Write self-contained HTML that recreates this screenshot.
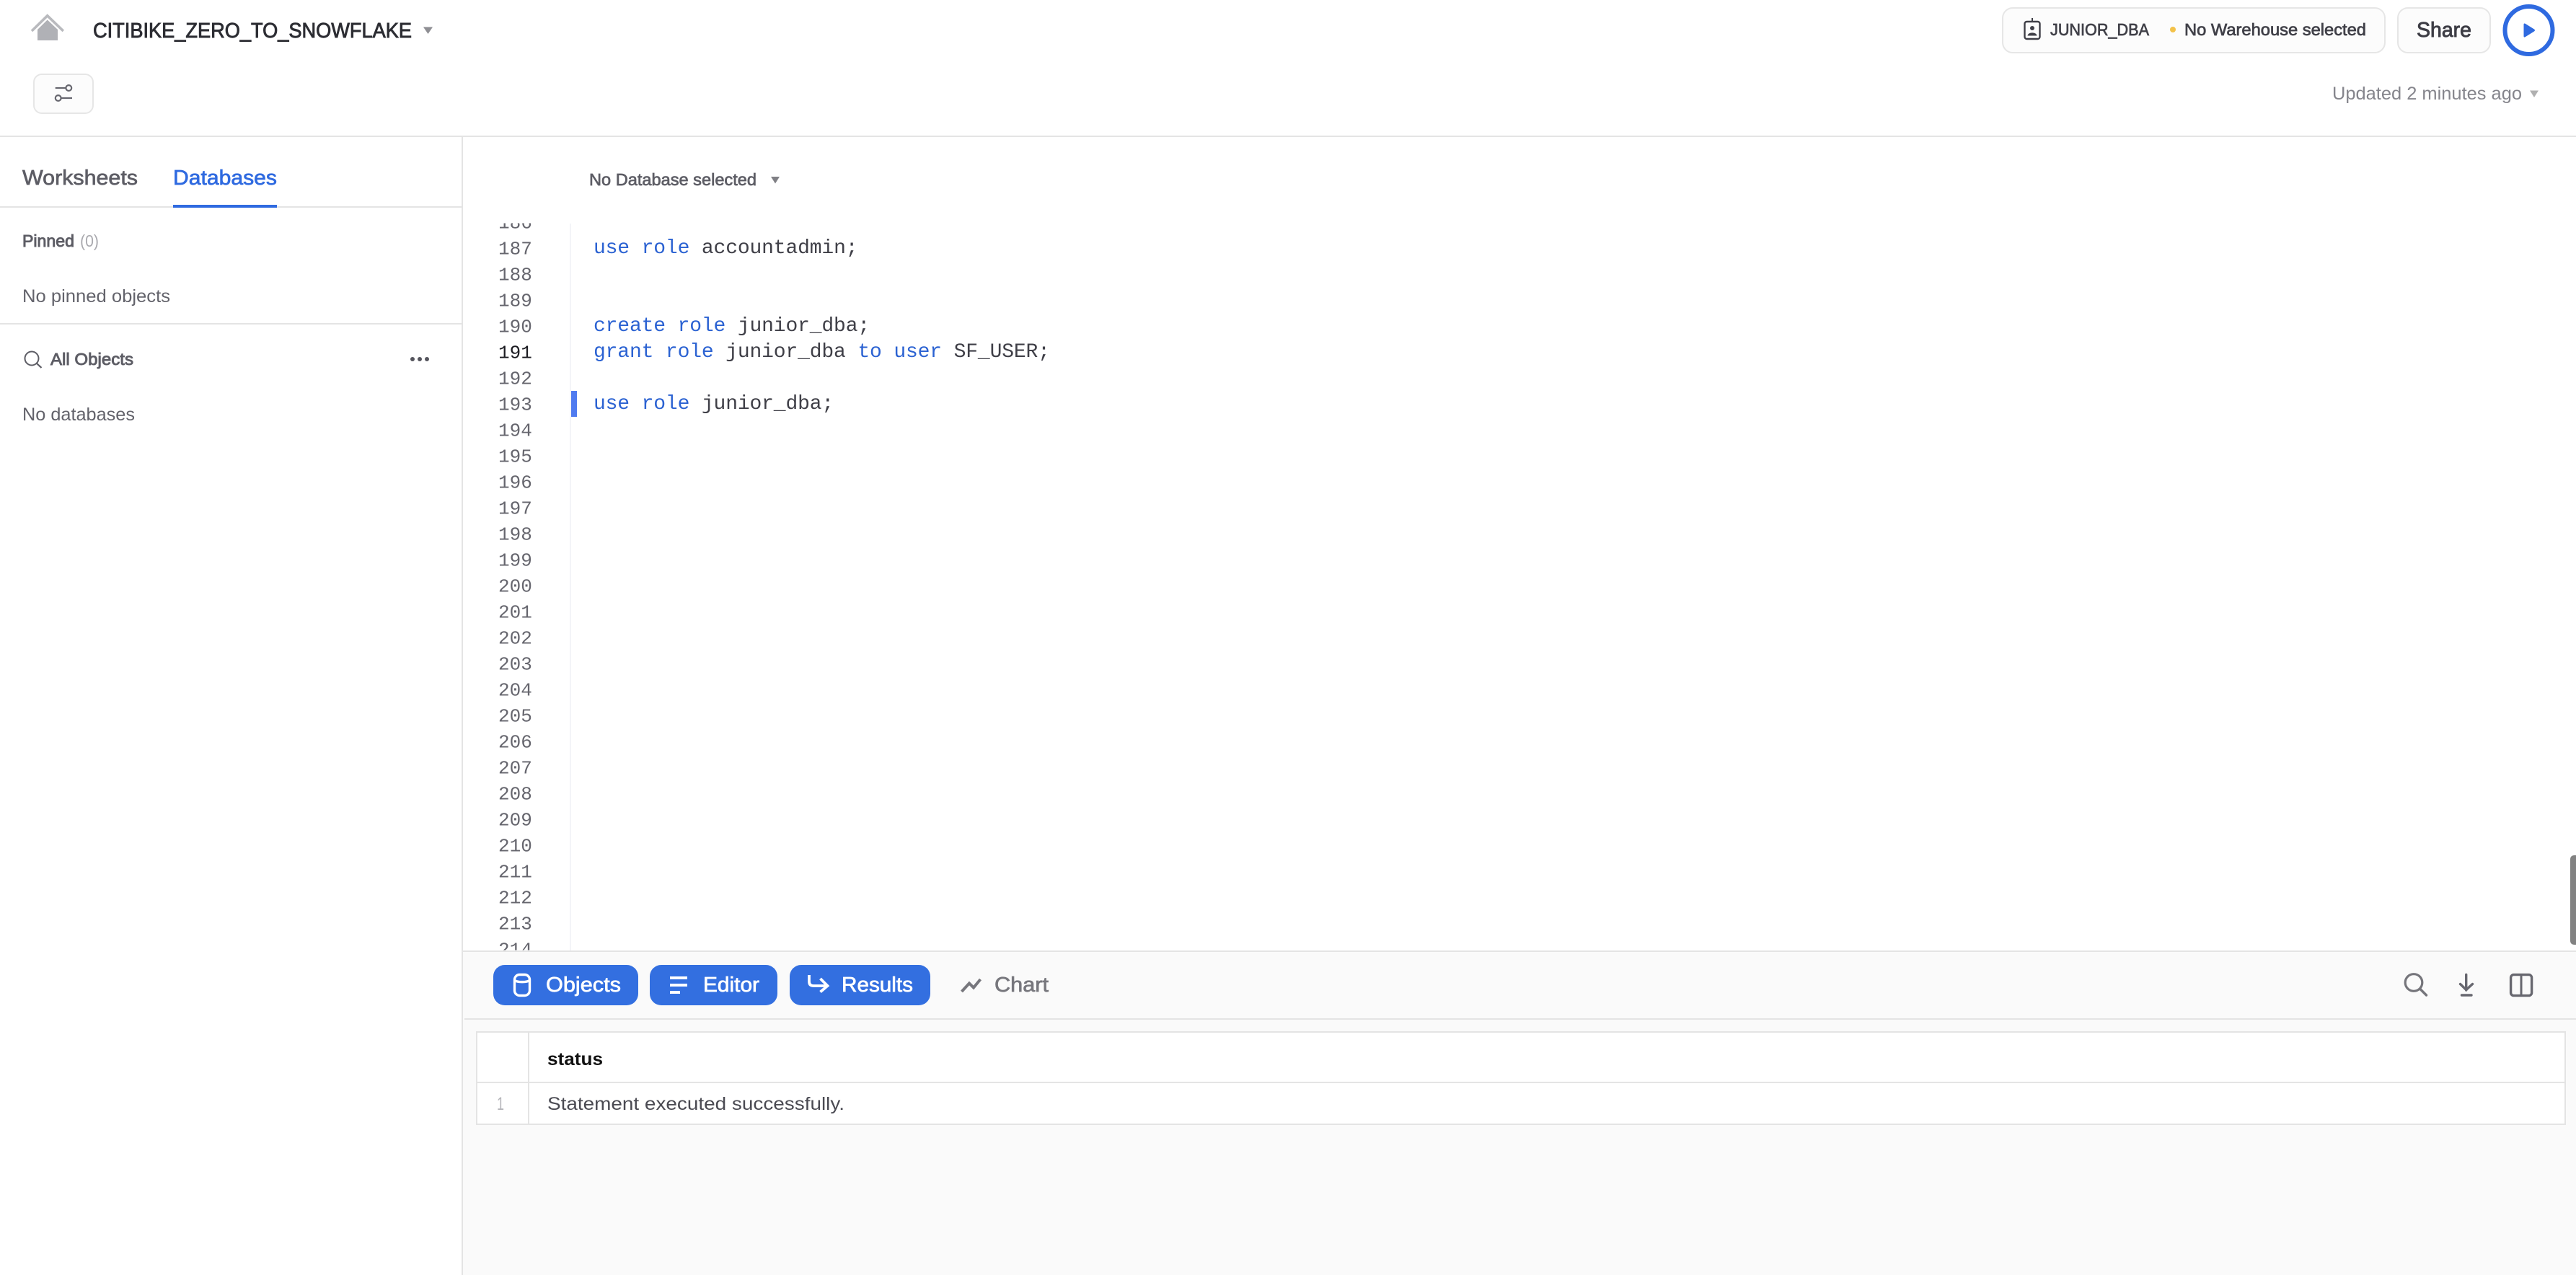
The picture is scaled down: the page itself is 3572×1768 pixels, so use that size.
<!DOCTYPE html>
<html lang="en">
<head>
<meta charset="utf-8">
<title>CITIBIKE_ZERO_TO_SNOWFLAKE</title>
<style>
html,body{margin:0;padding:0;background:#fff;width:3572px;height:1768px;overflow:hidden}
svg{display:block}
text{font-family:"Liberation Sans",Arial,sans-serif;white-space:pre}
.ln{font-family:"Liberation Mono",monospace;font-size:26px;fill:#66666e}
.code{font-family:"Liberation Mono",monospace;font-size:28px;fill:#3f3f47;letter-spacing:-.15px}
.kw{fill:#2b62d2}
.med{stroke-width:.7px}
</style>
</head>
<body>
<svg width="3572" height="1768" viewBox="0 0 3572 1768" xmlns="http://www.w3.org/2000/svg">
<defs>
<clipPath id="ed"><rect x="644" y="310" width="2900" height="1008"/></clipPath>
</defs>
<rect width="3572" height="1768" fill="#fff"/>

<!-- bottom panel background -->
<rect x="642" y="1320" width="2930" height="448" fill="#fafafa"/>

<!-- header dividers -->
<rect x="0" y="188" width="3572" height="2" fill="#e4e4e4"/>
<rect x="640" y="190" width="2" height="1578" fill="#e4e4e4"/>

<!-- home icon -->
<path d="M44 43 L65.700 21.800 L87.800 43" fill="none" stroke="#b9babe" stroke-width="3.600"/>
<path d="M65.700 27.500 L80 41 V56 H52 V41 Z" fill="#b0b1b6"/>

<!-- title -->
<text x="129" y="52" font-size="29" fill="#2c2d33" stroke="#2c2d33" stroke-width=".9" textLength="442" lengthAdjust="spacingAndGlyphs">CITIBIKE_ZERO_TO_SNOWFLAKE</text>
<path d="M587 37.500 H600 L593.500 47 Z" fill="#8e8e93"/>

<!-- settings button -->
<rect x="47" y="103" width="82" height="54" rx="11" fill="#fcfcfc" stroke="#e6e6e6" stroke-width="2"/>
<g fill="none" stroke="#66666e" stroke-width="2.200">
<path d="M76.700 122 H90.500"/><circle cx="95.300" cy="122" r="3.900"/>
<circle cx="80.700" cy="136" r="3.900"/><path d="M85.500 136 H100"/>
</g>

<!-- role / warehouse box -->
<rect x="2777" y="11" width="530" height="62" rx="14" fill="#fcfcfc" stroke="#e6e6e6" stroke-width="2"/>
<rect x="2807.500" y="30" width="21" height="24" rx="3" fill="none" stroke="#3f3f47" stroke-width="2.400"/>
<path d="M2818 25 V30" stroke="#3f3f47" stroke-width="2"/>
<circle cx="2818" cy="39" r="3" fill="#3f3f47"/>
<path d="M2811.500 49.500 C2812 44 2824 44 2824.500 49.500 Z" fill="#3f3f47"/>
<text x="2843" y="49" font-size="23" fill="#404048" stroke="#404048" class="med" textLength="137" lengthAdjust="spacingAndGlyphs">JUNIOR_DBA</text>
<circle cx="3013" cy="41" r="4" fill="#f3c24a"/>
<text x="3029" y="49" font-size="23" fill="#404048" stroke="#404048" class="med" textLength="252" lengthAdjust="spacingAndGlyphs">No Warehouse selected</text>

<!-- share -->
<rect x="3325" y="11" width="128" height="62" rx="14" fill="#fcfcfc" stroke="#e6e6e6" stroke-width="2"/>
<text x="3351" y="51" font-size="29" fill="#3d3d45" stroke="#3d3d45" stroke-width=".9" textLength="76" lengthAdjust="spacingAndGlyphs">Share</text>

<!-- run -->
<circle cx="3506.500" cy="42" r="33" fill="#fff" stroke="#2f6ae0" stroke-width="6"/>
<path d="M3499.500 34 Q3499.500 31.500 3502 33 L3514 40.500 Q3516 42 3514 43.500 L3502 51 Q3499.500 52.500 3499.500 50 Z" fill="#2f6ae0"/>

<!-- updated -->
<text x="3234" y="138" font-size="25" fill="#85858c" textLength="263" lengthAdjust="spacingAndGlyphs">Updated 2 minutes ago</text>
<path d="M3508 125.500 H3520 L3514 135 Z" fill="#b0b0b0"/>

<!-- sidebar tabs -->
<text x="31" y="256" font-size="29" fill="#5d5d65" stroke="#5d5d65" class="med" textLength="160" lengthAdjust="spacingAndGlyphs">Worksheets</text>
<text x="240" y="256" font-size="29" fill="#2f6ae0" stroke="#2f6ae0" class="med" textLength="144" lengthAdjust="spacingAndGlyphs">Databases</text>
<rect x="0" y="286" width="640" height="2" fill="#e4e4e4"/>
<rect x="240" y="284" width="144" height="4" fill="#2f6ae0"/>

<!-- pinned -->
<text x="31" y="342" font-size="23" fill="#5d5d65" stroke="#5d5d65" stroke-width=".9" textLength="72" lengthAdjust="spacingAndGlyphs">Pinned</text>
<text x="111" y="342" font-size="23" fill="#aaaaaf" textLength="26" lengthAdjust="spacingAndGlyphs">(0)</text>
<text x="31" y="419" font-size="25" fill="#63636b" textLength="205" lengthAdjust="spacingAndGlyphs">No pinned objects</text>
<rect x="0" y="448" width="640" height="2" fill="#e4e4e4"/>

<!-- all objects -->
<circle cx="44" cy="497" r="9.500" fill="none" stroke="#5d5d65" stroke-width="2"/>
<path d="M51 504 L57.500 510" stroke="#5d5d65" stroke-width="2.200" fill="none"/>
<text x="70" y="506" font-size="23" fill="#5d5d65" stroke="#5d5d65" stroke-width=".9" textLength="115" lengthAdjust="spacingAndGlyphs">All Objects</text>
<circle cx="572" cy="498" r="3" fill="#55555d"/>
<circle cx="582" cy="498" r="3" fill="#55555d"/>
<circle cx="592" cy="498" r="3" fill="#55555d"/>
<text x="31" y="583" font-size="25" fill="#63636b" textLength="156" lengthAdjust="spacingAndGlyphs">No databases</text>

<!-- database selector -->
<text x="817" y="257" font-size="23" fill="#5d5d65" stroke="#5d5d65" class="med" textLength="232" lengthAdjust="spacingAndGlyphs">No Database selected</text>
<path d="M1069 245 H1081 L1075 254.500 Z" fill="#808085"/>

<!-- editor -->
<rect x="790" y="310" width="2" height="1008" fill="#f3f4f8"/>
<rect x="792" y="542" width="8" height="36" fill="#4f7bf0"/>
<g clip-path="url(#ed)" transform="translate(0,-.5)">
<text class="ln" x="691" y="317">186</text>
<text class="ln" x="691" y="353">187</text>
<text class="ln" x="691" y="389">188</text>
<text class="ln" x="691" y="425">189</text>
<text class="ln" x="691" y="461">190</text>
<text class="ln" x="691" y="497" style="fill:#1c1c22">191</text>
<text class="ln" x="691" y="533">192</text>
<text class="ln" x="691" y="569">193</text>
<text class="ln" x="691" y="605">194</text>
<text class="ln" x="691" y="641">195</text>
<text class="ln" x="691" y="677">196</text>
<text class="ln" x="691" y="713">197</text>
<text class="ln" x="691" y="749">198</text>
<text class="ln" x="691" y="785">199</text>
<text class="ln" x="691" y="821">200</text>
<text class="ln" x="691" y="857">201</text>
<text class="ln" x="691" y="893">202</text>
<text class="ln" x="691" y="929">203</text>
<text class="ln" x="691" y="965">204</text>
<text class="ln" x="691" y="1001">205</text>
<text class="ln" x="691" y="1037">206</text>
<text class="ln" x="691" y="1073">207</text>
<text class="ln" x="691" y="1109">208</text>
<text class="ln" x="691" y="1145">209</text>
<text class="ln" x="691" y="1181">210</text>
<text class="ln" x="691" y="1217">211</text>
<text class="ln" x="691" y="1253">212</text>
<text class="ln" x="691" y="1289">213</text>
<text class="ln" x="691" y="1325">214</text>
</g>
<text class="code" x="823" y="351"><tspan class="kw">use role</tspan> accountadmin;</text>
<text class="code" x="823" y="459"><tspan class="kw">create role</tspan> junior_dba;</text>
<text class="code" x="823" y="495"><tspan class="kw">grant role</tspan> junior_dba <tspan class="kw">to user</tspan> SF_USER;</text>
<text class="code" x="823" y="567"><tspan class="kw">use role</tspan> junior_dba;</text>

<!-- scrollbar -->
<path d="M3572 1186 H3570 Q3564 1186 3564 1192 V1304 Q3564 1310 3570 1310 H3572 Z" fill="#828282"/>

<!-- bottom toolbar -->
<rect x="642" y="1318" width="2930" height="2" fill="#e4e4e4"/>
<rect x="644" y="1412" width="2928" height="2" fill="#e4e4e4"/>

<rect x="684" y="1338" width="201" height="56" rx="16" fill="#336fe0"/>
<rect x="901" y="1338" width="177" height="56" rx="16" fill="#336fe0"/>
<rect x="1095" y="1338" width="195" height="56" rx="16" fill="#336fe0"/>

<g fill="none" stroke="#fff" stroke-width="3.400">
<rect x="713.500" y="1351.500" width="21" height="29" rx="7"/>
<path d="M713.500 1359 C716 1362.500 732 1362.500 734.500 1359"/>
</g>
<text x="757" y="1375" font-size="29" fill="#fff" stroke="#fff" class="med" textLength="104" lengthAdjust="spacingAndGlyphs">Objects</text>

<rect x="929" y="1354" width="24" height="4" fill="#fff"/>
<rect x="929" y="1364" width="24" height="4" fill="#fff"/>
<rect x="929" y="1374" width="14" height="4" fill="#fff"/>
<text x="975" y="1375" font-size="29" fill="#fff" stroke="#fff" class="med" textLength="78" lengthAdjust="spacingAndGlyphs">Editor</text>

<path d="M1122 1352 V1361 Q1122 1367 1128 1367 H1147 M1137.500 1357 L1147.500 1367 L1137.500 1375.500" fill="none" stroke="#fff" stroke-width="3.800"/>
<text x="1167" y="1375" font-size="29" fill="#fff" stroke="#fff" class="med" textLength="99" lengthAdjust="spacingAndGlyphs">Results</text>

<path d="M1333.500 1375 L1344 1363.500 L1350 1369.500 L1359.500 1358" fill="none" stroke="#77777d" stroke-width="4"/>
<text x="1379" y="1375" font-size="29" fill="#77777d" stroke="#77777d" class="med" textLength="75" lengthAdjust="spacingAndGlyphs">Chart</text>

<!-- right toolbar icons -->
<g fill="none" stroke-linecap="round">
<circle cx="3347" cy="1362.500" r="11.800" stroke="#75757b" stroke-width="3.200"/>
<path d="M3356 1371.500 L3364.500 1380" stroke="#75757b" stroke-width="3.400"/>
<g stroke="#67676f" stroke-width="3.400">
<path d="M3419.700 1351.500 V1373"/>
<path d="M3411.500 1364.500 L3419.700 1372.500 L3428.500 1364.500"/>
<path d="M3413.500 1380 H3427"/>
</g>
<rect x="3481.600" y="1351.600" width="29" height="29" rx="4" stroke="#67676f" stroke-width="3.400"/>
<path d="M3496 1352 V1380" stroke="#67676f" stroke-width="3"/>
</g>

<!-- results table -->
<rect x="661" y="1431" width="2896" height="128" fill="#fff" stroke="#e4e4e4" stroke-width="2"/>
<rect x="661" y="1500" width="2896" height="2" fill="#e4e4e4"/>
<rect x="732" y="1431" width="2" height="128" fill="#e4e4e4"/>
<text x="759" y="1477" font-size="25" font-weight="700" fill="#111" textLength="77" lengthAdjust="spacingAndGlyphs">status</text>
<text x="689" y="1539" font-size="25" fill="#b5b5ba" textLength="10" lengthAdjust="spacingAndGlyphs">1</text>
<text x="759" y="1539" font-size="25" fill="#4a4a52" textLength="412" lengthAdjust="spacingAndGlyphs">Statement executed successfully.</text>
</svg>
</body>
</html>
